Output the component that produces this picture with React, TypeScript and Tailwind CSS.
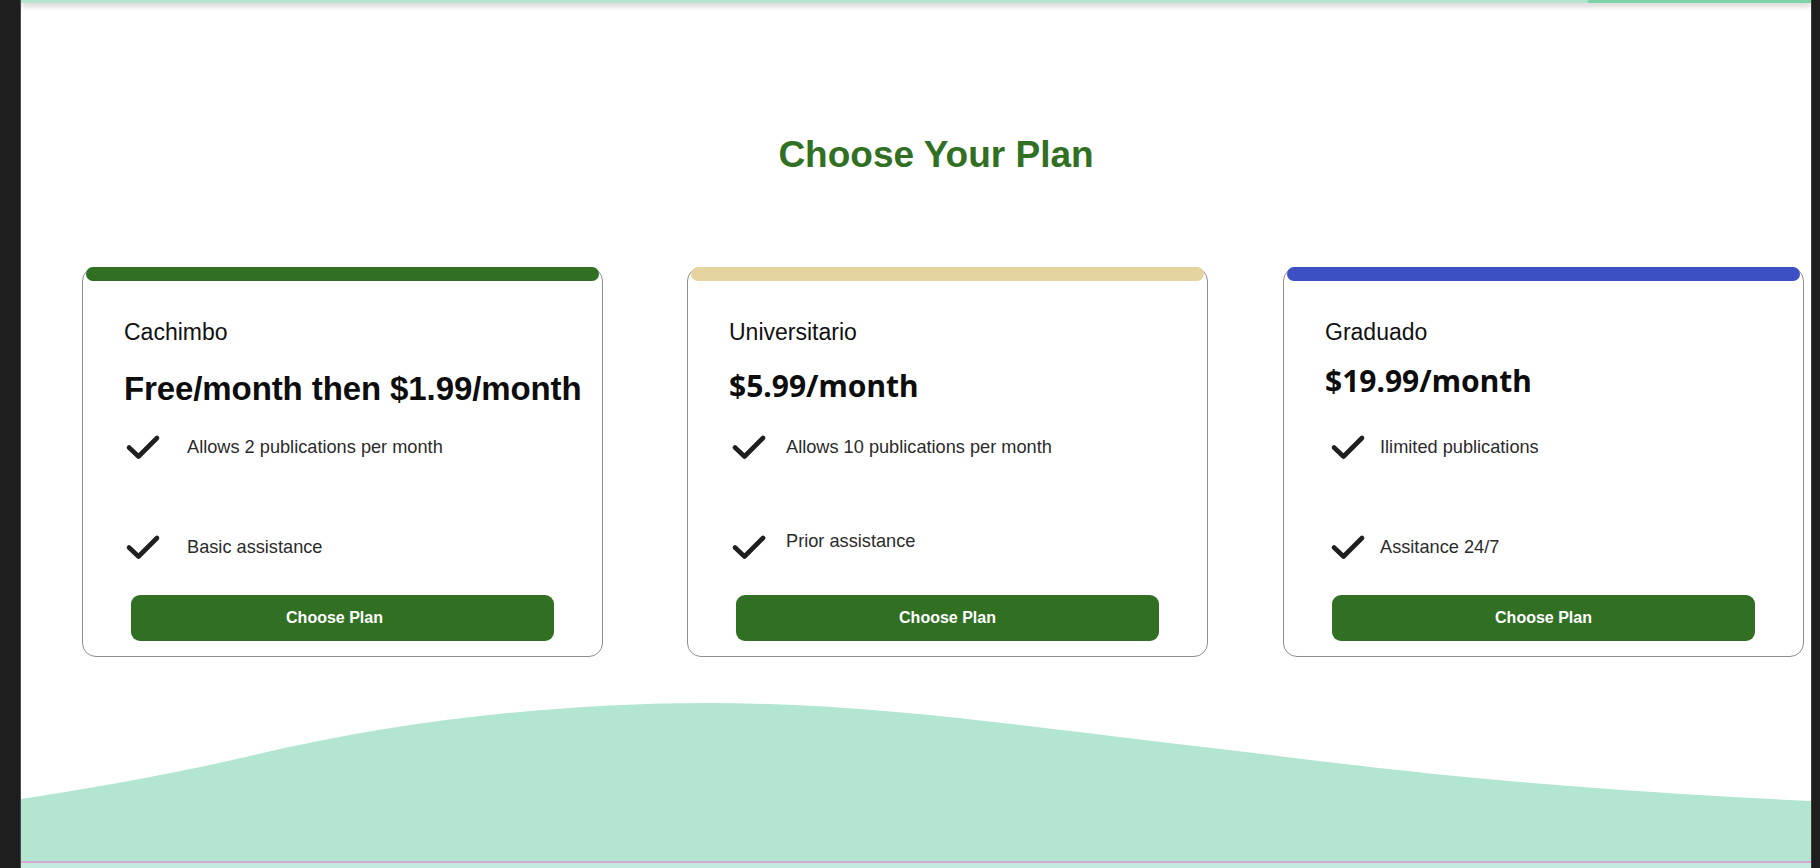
import React from "react";

type Feature = { text: string; raise?: boolean };

type Plan = {
  name: string;
  price: string;
  priceClass: string;
  accent: string;
  gapClass: string;
  iconClass: string;
  rowGap: string;
  buttonClass: string;
  features: Feature[];
};

const plans: Plan[] = [
  {
    name: "Cachimbo",
    price: "Free/month then $1.99/month",
    priceClass: "mt-[23px] font-['Liberation_Sans',Arial,sans-serif] text-[33px] tracking-[-0.1px]",
    accent: "bg-[#316f22]",
    gapClass: "ml-0",
    iconClass: "ml-[1px]",
    rowGap: "gap-[26px]",
    buttonClass: "pr-[16px]",
    features: [{ text: "Allows 2 publications per month" }, { text: "Basic assistance" }],
  },
  {
    name: "Universitario",
    price: "$5.99/month",
    priceClass: "mt-[20px] mb-[3px] font-['Noto_Sans',sans-serif] text-[30px]",
    accent: "bg-[#e5d49f]",
    gapClass: "ml-[84px]",
    iconClass: "ml-[2px]",
    rowGap: "gap-[19px]",
    buttonClass: "",
    features: [{ text: "Allows 10 publications per month" }, { text: "Prior assistance", raise: true }],
  },
  {
    name: "Graduado",
    price: "$19.99/month",
    priceClass: "mt-[15px] mb-[8px] font-['Noto_Sans',sans-serif] text-[30px]",
    accent: "bg-[#3c50c3]",
    gapClass: "ml-[75px]",
    iconClass: "ml-[5px]",
    rowGap: "gap-[14px]",
    buttonClass: "",
    features: [{ text: "Ilimited publications" }, { text: "Assitance 24/7" }],
  },
];

function CheckMark({ className }: { className: string }) {
  return (
    <svg width="36" height="26" viewBox="0 0 36 26" fill="none" className={`shrink-0 ${className}`}>
      <path
        d="M4 13.5 L13.5 22.5 L32 4"
        stroke="#1f1f1f"
        strokeWidth="4.6"
        strokeLinecap="round"
        strokeLinejoin="round"
      />
    </svg>
  );
}

function PlanCard({ plan }: { plan: Plan }) {
  return (
    <div
      className={`flex h-[390px] w-[521px] shrink-0 flex-col rounded-[14px] border border-[#8e8e8e] bg-white ${plan.gapClass}`}
    >
      {/* accent strip */}
      <div className={`-mt-px mx-[3px] h-[14px] rounded-full ${plan.accent}`} />

      <div className="flex flex-1 flex-col pl-[41px] pr-[8px]">
        <h3 className="mt-[37px] text-[23px] leading-[28px] text-[#111]">{plan.name}</h3>
        <p className={`whitespace-nowrap font-bold leading-[40px] text-[#0d0d0d] ${plan.priceClass}`}>
          {plan.price}
        </p>

        <ul className="mt-[22px] flex flex-col gap-[68px]">
          {plan.features.map((f) => (
            <li key={f.text} className={`flex h-[32px] items-center ${plan.rowGap}`}>
              <CheckMark className={plan.iconClass} />
              <span className={`text-[18.2px] leading-[24px] text-[#2b2b2b] ${f.raise ? "mb-[12px]" : ""}`}>
                {f.text}
              </span>
            </li>
          ))}
        </ul>

        <button
          className={`ml-[7px] mt-[32px] h-[46px] w-[423px] rounded-[9px] bg-[#317023] text-[16px] font-bold text-white ${plan.buttonClass}`}
        >
          Choose Plan
        </button>
      </div>
    </div>
  );
}

export default function App() {
  return (
    <div className="flex h-[868px] w-full overflow-hidden bg-[#1e1e1e] font-['Liberation_Sans',Arial,sans-serif]">
      <div className="w-[21px] shrink-0 border-r border-[#4b4b4b]" />

      <div className="flex w-[1790px] shrink-0 flex-col overflow-hidden bg-white">
        {/* top strip */}
        <div className="relative z-10 flex h-[3px] shrink-0 shadow-[0_2px_6px_rgba(0,0,0,0.35)]">
          <div className="flex-1 bg-[#b2e6d0]" />
          <div className="w-[223px] bg-[#7bd3a7]" />
        </div>

        <main className="flex shrink-0 flex-col pl-[61px] pr-[6px]">
          <h1 className="mt-[132px] pr-[15px] text-center text-[37px] font-bold leading-[40px] text-[#317023]">
            Choose Your Plan
          </h1>

          <div className="mt-[92px] flex">
            {plans.map((p) => (
              <PlanCard key={p.name} plan={p} />
            ))}
          </div>
        </main>

        {/* wave */}
        <svg
          className="mt-[43px] block h-[161px] w-full shrink-0"
          viewBox="0 0 1790 161"
          preserveAspectRatio="none"
        >
          <path
            d="M0 99 C90 85 160 72 229 56 C380 20 540 3 687 3 C850 3 1000 26 1140 42 C1300 60 1450 85 1790 101 L1790 161 L0 161 Z"
            fill="#b2e6d1"
          />
        </svg>
        <div className="h-[2px] shrink-0 bg-[#d6a9d4]" />
        <div className="flex-1 bg-[#c4ebe0]" />
      </div>

      <div className="flex-1 border-l border-[#3a3a3a]" />
    </div>
  );
}
